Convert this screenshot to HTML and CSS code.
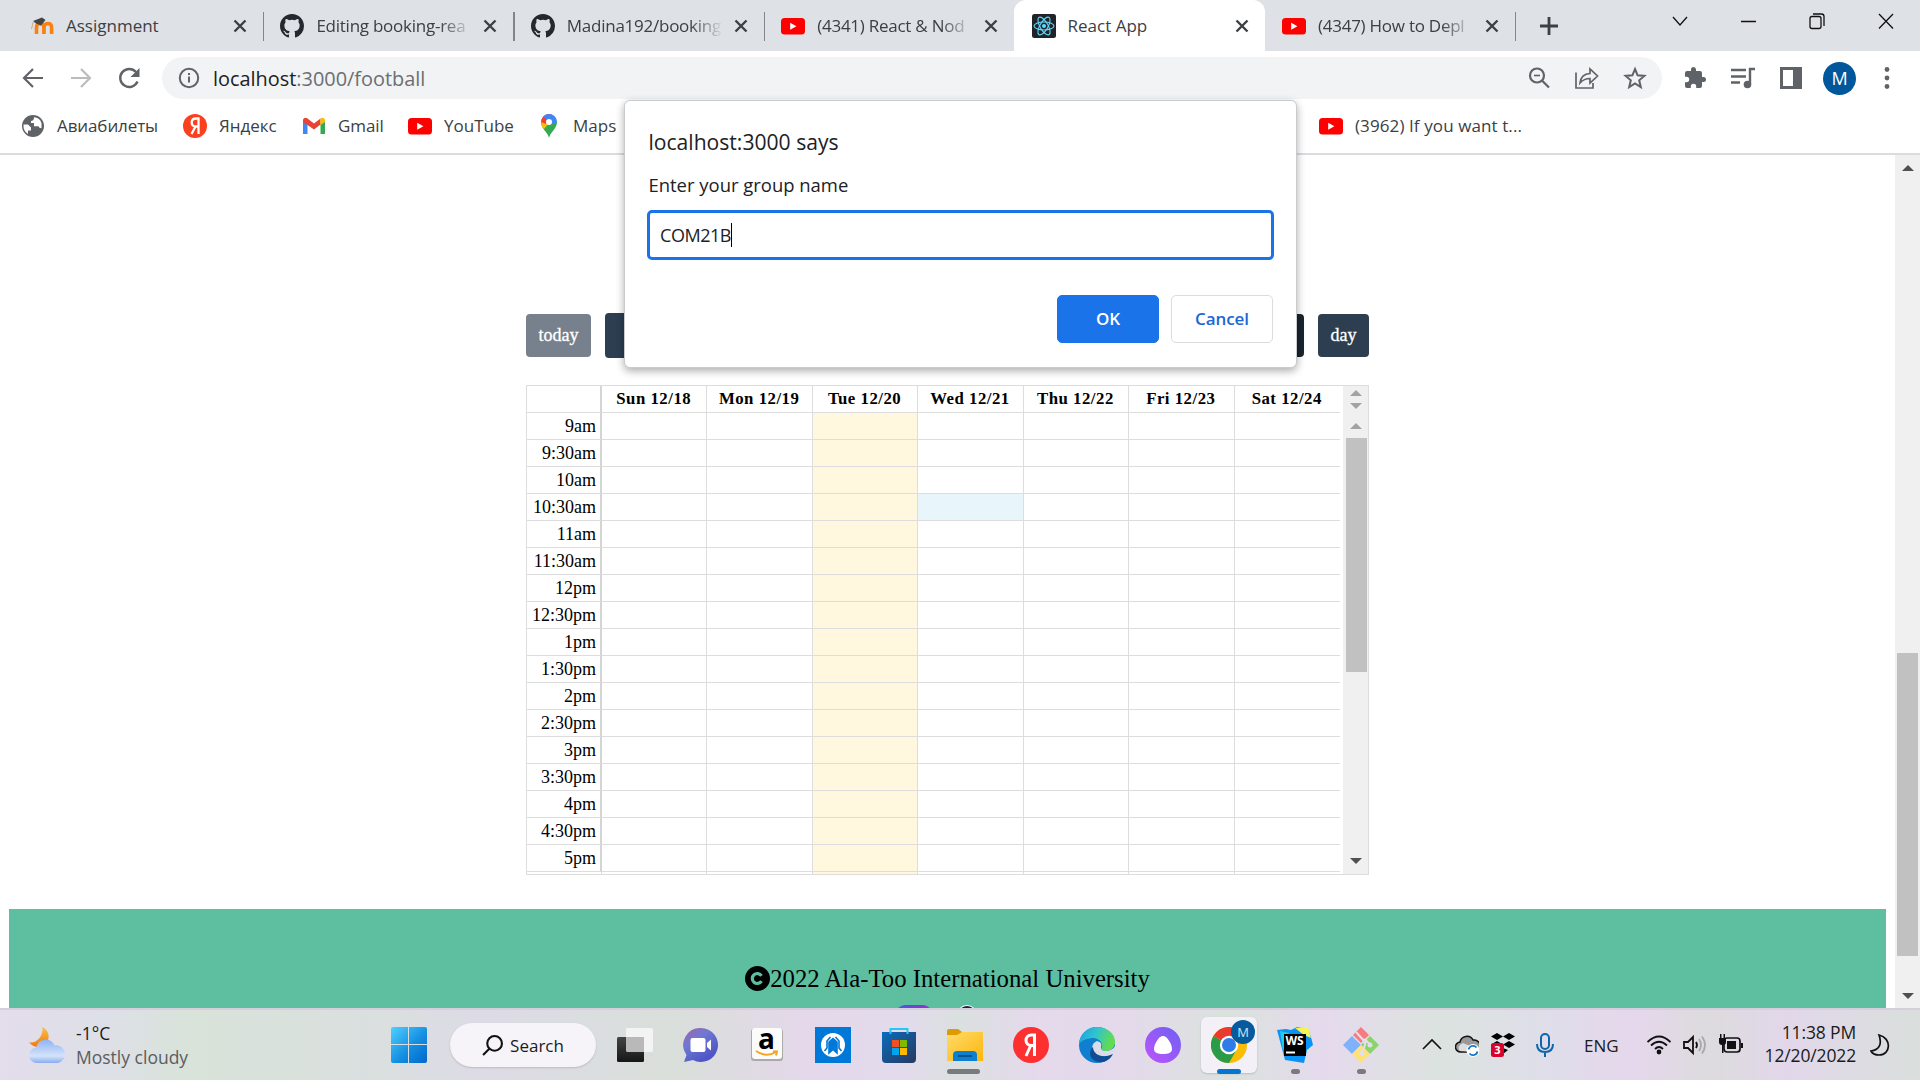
FILE: index.html
```html
<!DOCTYPE html>
<html lang="en">
<head>
<meta charset="utf-8">
<title>React App</title>
<link rel="stylesheet" href="styles.css">
</head>
<body>
<svg class="defs" width="0" height="0">
  <symbol id="x" viewBox="0 0 14 14"><path d="M1.5 1.5l11 11M12.5 1.5l-11 11" stroke="#3c4043" stroke-width="2.4"/></symbol>
  <symbol id="gh" viewBox="0 0 16 16"><path fill="#24292f" d="M8 0C3.58 0 0 3.58 0 8c0 3.54 2.29 6.53 5.47 7.59.4.07.55-.17.55-.38 0-.19-.01-.82-.01-1.49-2.01.37-2.53-.49-2.69-.94-.09-.23-.48-.94-.82-1.13-.28-.15-.68-.52-.01-.53.63-.01 1.08.58 1.23.82.72 1.21 1.87.87 2.33.66.07-.52.28-.87.51-1.07-1.78-.2-3.64-.89-3.64-3.95 0-.87.31-1.59.82-2.15-.08-.2-.36-1.02.08-2.12 0 0 .67-.21 2.2.82a7.6 7.6 0 0 1 4 0c1.53-1.04 2.2-.82 2.2-.82.44 1.1.16 1.92.08 2.12.51.56.82 1.27.82 2.15 0 3.07-1.87 3.75-3.65 3.95.29.25.54.73.54 1.48 0 1.07-.01 1.93-.01 2.2 0 .21.15.46.55.38A8.01 8.01 0 0 0 16 8c0-4.42-3.58-8-8-8z"/></symbol>
  <symbol id="yt" viewBox="0 0 24 24"><rect y="4" width="24" height="16.5" rx="3.5" fill="#f00"/><path d="M9.2 8.8v7l6.2-3.5z" fill="#fff"/></symbol>
  <linearGradient id="win" x2="1" y2="1"><stop stop-color="#4fd0ff"/><stop offset=".55" stop-color="#1590e2"/><stop offset="1" stop-color="#0067cb"/></linearGradient>
  <linearGradient id="cloud" y2="1" x2="0"><stop stop-color="#8fb4f3"/><stop offset=".7" stop-color="#d3e3fa"/><stop offset="1" stop-color="#8aacf0"/></linearGradient>
  <linearGradient id="moonc" y2="1" x2="0"><stop stop-color="#f8c04a"/><stop offset="1" stop-color="#f1790b"/></linearGradient>
  <linearGradient id="chat" x2=".7" y2="1"><stop stop-color="#a165a8"/><stop offset=".4" stop-color="#6f78d2"/><stop offset="1" stop-color="#4b4fc4"/></linearGradient>
  <linearGradient id="store" x2="1" y2="1"><stop stop-color="#0a6cbd"/><stop offset="1" stop-color="#28395f"/></linearGradient>
  <linearGradient id="fold" x2="1" y2="1"><stop stop-color="#ffdc6b"/><stop offset="1" stop-color="#fcb60c"/></linearGradient>
  <linearGradient id="edge1" x2="1" y2=".3"><stop stop-color="#1b9de2"/><stop offset=".5" stop-color="#31c3d0"/><stop offset="1" stop-color="#63dc4e"/></linearGradient>
  <linearGradient id="alice" x2="1" y1="1" y2="0"><stop stop-color="#c053fb"/><stop offset="1" stop-color="#6b61f3"/></linearGradient>
  <linearGradient id="dark" x2="0" y2="1"><stop stop-color="#444"/><stop offset="1" stop-color="#161616"/></linearGradient>
</svg>

<header class="tabs">
  <div class="tab">
    <svg class="fav" viewBox="0 0 24 24"><path d="M6.500 20v-6.500q0-4 3.700-4t3.700 4v6.500M14 20v-6.500q0-4 3.800-4t3.800 4v6.500" stroke="#f98012" stroke-width="3.600" fill="none"/><path d="M3 7l9-3.500 3.500 2.500-4.500 5.500-5-2z" fill="#444"/><path d="M3.500 7l-2 8" stroke="#c9a98a" fill="none"/></svg>
    <span class="name">Assignment</span><svg class="close"><use href="#x"/></svg>
  </div>
  <div class="tab"><svg class="fav"><use href="#gh"/></svg><span class="name fade">Editing booking-rea</span><svg class="close"><use href="#x"/></svg></div>
  <div class="tab"><svg class="fav"><use href="#gh"/></svg><span class="name fade">Madina192/booking</span><svg class="close"><use href="#x"/></svg></div>
  <div class="tab plain"><svg class="fav"><use href="#yt"/></svg><span class="name fade">(4341) React &amp; Nod</span><svg class="close"><use href="#x"/></svg></div>
  <div class="tab active">
    <svg class="fav" viewBox="0 0 24 24"><rect width="24" height="24" rx="2.500" fill="#20232a"/><g fill="none" stroke="#61dafb" stroke-width="1.100"><ellipse cx="12" cy="12" rx="10" ry="4"/><ellipse cx="12" cy="12" rx="10" ry="4" transform="rotate(60 12 12)"/><ellipse cx="12" cy="12" rx="10" ry="4" transform="rotate(120 12 12)"/></g><circle cx="12" cy="12" r="2" fill="#61dafb"/></svg>
    <span class="name">React App</span><svg class="close"><use href="#x"/></svg>
  </div>
  <div class="tab"><svg class="fav"><use href="#yt"/></svg><span class="name fade">(4347) How to Depl</span><svg class="close"><use href="#x"/></svg></div>
  <svg class="plus" viewBox="0 0 20 20"><path d="M10 1v18M1 10h18" stroke="#3c4043" stroke-width="2.800"/></svg>
  <svg class="controls" viewBox="0 0 222 24" fill="none" stroke="#111" stroke-width="1.300"><path d="M1 7l7 8 7-8M69 11.500h15M207 4l14 14.500M221 4l-14 14.500"/><rect x="138" y="6.500" width="11" height="12" rx="2"/><path d="M141 4h8.500q2.500 0 2.500 2.500v9.500"/></svg>
</header>

<nav class="toolbar">
  <svg class="ic" viewBox="0 0 24 24" fill="none" stroke="#5f6368" stroke-width="2.200"><path d="M22 12H3M12 3l-9 9 9 9"/></svg>
  <svg class="ic" viewBox="0 0 24 24" fill="none" stroke="#babcbe" stroke-width="2.200"><path d="M2 12h19M12 3l9 9-9 9"/></svg>
  <svg class="ic" viewBox="0 0 24 24"><path d="M19.500 15.500A9 9 0 1 1 18 6" fill="none" stroke="#5f6368" stroke-width="2.400"/><path d="M21.500 2v9h-9z" fill="#5f6368"/></svg>
  <div class="omnibox">
    <svg class="info" viewBox="0 0 22 22"><circle cx="11" cy="11" r="9.200" fill="none" stroke="#5f6368" stroke-width="2"/><path d="M11 9.500v6M11 6v2" stroke="#5f6368" stroke-width="2"/></svg>
    <span class="url"><b>localhost</b>:3000/football</span>
    <svg class="ic" viewBox="0 0 24 24" fill="none" stroke="#5f6368" stroke-width="2.200"><circle cx="10" cy="9.500" r="7"/><path d="M15 14.500l7 7"/><path d="M7 9.500h6" stroke-width="1.600"/></svg>
    <svg class="ic" viewBox="0 0 24 24" fill="none" stroke="#5f6368" stroke-width="1.700"><path d="M1 6.500v15.500h17v-5M5 17q1-9 10-9.500V3l7.500 7-7.500 7v-4.500q-6 0-10 4.500z"/></svg>
    <svg class="ic" viewBox="0 0 24 24" fill="none" stroke="#5f6368" stroke-width="2"><path d="M12 3l2.600 6.300 6.800.6-5.200 4.400 1.600 6.700-5.800-3.600L6.200 21l1.600-6.700-5.200-4.400 6.800-.6z"/></svg>
  </div>
  <div class="actions">
    <svg class="ic" viewBox="0 0 24 24"><path fill="#5f6368" d="M21.500 11H20V7a2 2 0 0 0-2-2h-4V3.500a2.500 2.500 0 0 0-5 0V5H5a2 2 0 0 0-2 2v3.800h1.500a2.700 2.700 0 0 1 0 5.400H3V20a2 2 0 0 0 2 2h3.800v-1.500a2.700 2.700 0 0 1 5.400 0V22H18a2 2 0 0 0 2-2v-4h1.500a2.500 2.500 0 0 0 0-5z"/></svg>
    <svg class="ic" viewBox="0 0 24 24"><path d="M0 4h15M0 10.500h15M0 16.500h9M19 18V3h5" stroke="#5f6368" stroke-width="2.400" fill="none"/><circle cx="16.500" cy="18.500" r="3.800" fill="#5f6368"/></svg>
    <svg class="ic" viewBox="0 0 24 24"><path fill="#5f6368" d="M1 1h22v22H1zM4 4v16h10V4z" fill-rule="evenodd"/></svg>
    <span class="avatar">M</span>
    <svg class="ic" viewBox="0 0 24 24" fill="#5f6368"><circle cx="11" cy="3.500" r="2.400"/><circle cx="11" cy="12" r="2.400"/><circle cx="11" cy="20.500" r="2.400"/></svg>
  </div>
</nav>

<nav class="bookmarks">
  <a class="bm b1"><svg viewBox="0 0 24 24"><circle cx="12" cy="12" r="11" fill="#5f6368"/><path d="M2.500 10.500h4.500l3 3v3h-3v3.500Q2 17 2.500 10.500zM13 3.200q6 .5 7.500 6v5q-2.500 0-3-2h-4.500V9h-3V7q3 0 3-3.800z" fill="#fff"/></svg>Авиабилеты</a>
  <a class="bm b2"><svg viewBox="0 0 24 24"><circle cx="12" cy="12" r="12" fill="#fc3f1d"/><path d="M15.500 20V4.500h-2.300c-3 0-4.500 1.800-4.500 4s1.500 4 4.500 4h2M12.500 12.500L8.500 20" fill="none" stroke="#fff" stroke-width="2.300"/></svg>Яндекс</a>
  <a class="bm b3"><svg viewBox="0 0 24 24"><path d="M1 6v14h4.500V9z" fill="#4285f4"/><path d="M23 6v14h-4.500V9z" fill="#34a853"/><path d="M1 6.500C1 3.500 4 3 5.500 4.500L12 9.500l6.500-5v6L12 15.500 5.500 11 1 8z" fill="#ea4335"/><path d="M18.500 4.500C20.500 3 23 4 23 6.500V8l-4.500 3z" fill="#fbbc04"/></svg>Gmail</a>
  <a class="bm b4"><svg><use href="#yt"/></svg>YouTube</a>
  <a class="bm b5"><svg viewBox="0 0 24 24"><path d="M12 24c-1-6-8-9-8-16h16c0 7-7 10-8 16z" fill="#34a853"/><path d="M4 8q0 4 3 7l7-8-8-3Q4 6 4 8z" fill="#fbbc04"/><path d="M5.500 3.500Q8 0 12 0l3 .5L9 10 4 8q0-3 1.500-4.500z" fill="#ea4335"/><path d="M6 3Q8 0 12 0c5 0 8 4 8 8l-5 2-4-4z" fill="#4285f4"/><circle cx="12" cy="8" r="3" fill="#fff"/></svg>Maps</a>
  <a class="bm last"><svg><use href="#yt"/></svg>(3962) If you want t...</a>
</nav>

<main class="viewport">
  <section class="page">
    <div class="fc-bar">
      <button class="fc today">today</button><button class="fc prev"></button>
      <span class="grow"></span><button class="fc week"></button><button class="fc day">day</button>
    </div>
    <div class="calendar">
      <table class="grid">
        <colgroup><col class="axis"><col span="7"></colgroup>
        <thead><tr><th></th><th>Sun 12/18</th><th>Mon 12/19</th><th>Tue 12/20</th><th>Wed 12/21</th><th>Thu 12/22</th><th>Fri 12/23</th><th>Sat 12/24</th></tr></thead>
        <tbody id="slots"></tbody>
      </table>
      <div class="scroll">
        <i class="up pale"></i><i class="down pale second"></i><i class="up pale third"></i><span class="thumb"></span><i class="down"></i>
      </div>
    </div>
    <footer class="footer">
      <p><svg class="copy" viewBox="0 0 25 25"><circle cx="12.500" cy="12.500" r="12.500"/><path d="M16.500 9.800a5 5 0 1 0 0 5.400" fill="none" stroke="#5dbea0" stroke-width="3.200"/></svg>2022 Ala-Too International University</p>
      <div class="social"><i class="insta"></i><i class="git"></i></div>
    </footer>
  </section>
  <aside class="pagebar"><i class="up"></i><span class="thumb"></span><i class="down"></i></aside>
</main>

<div class="dialog">
  <h1>localhost:3000 says</h1>
  <label>Enter your group name</label>
  <div class="field"><span>COM21B</span><i class="caret"></i></div>
  <div class="buttons"><button class="ok">OK</button><button class="cancel">Cancel</button></div>
</div>

<div class="taskbar">
  <div class="weather">
    <svg viewBox="0 0 36 36" width="37" height="37"><path d="M13 0C21 4 21 14 14 18Q7 22 0 15q6 1 10-4t3-11z" fill="url(#moonc)"/><path d="M8 35a7.500 7.500 0 0 1-1-15 9.500 9.500 0 0 1 18-2 8.500 8.500 0 0 1 3 17z" fill="url(#cloud)"/></svg>
    <div><p>-1°C</p><p class="dim">Mostly cloudy</p></div>
  </div>
  <svg class="app" viewBox="0 0 36 36"><path d="M2 0h15v17H0V2q0-2 2-2zM18 0h16q2 0 2 2v15H18zM0 18h17v18H2q-2 0-2-2zM18 18h18v16q0 2-2 2H18z" fill="url(#win)"/></svg>
  <div class="search"><svg viewBox="0 0 20 20" width="21" height="21" fill="none" stroke="#111" stroke-width="2"><circle cx="12" cy="8" r="7"/><path d="M7 13l-6 6"/></svg>Search</div>
  <div class="apps">
    <svg class="app" viewBox="0 0 36 36"><rect y="10" width="27" height="25" rx="1.500" fill="url(#dark)"/><path d="M9 10V2.500Q9 1 10.500 1h24Q36 1 36 2.500v21q0 1.500-1.500 1.500H27V10z" fill="#f3f3f3"/><path d="M9 10h18v15H10.500Q9 25 9 23.500z" fill="#b9b9b9"/></svg>
    <svg class="app" viewBox="0 0 36 36"><path d="M18 1a17 17 0 1 1-8 32l-9 2 2.500-7A17 17 0 0 1 18 1z" fill="url(#chat)"/><rect x="7.500" y="11" width="15" height="14" rx="2" fill="#fff"/><path d="M24 16l4-3.500v11L24 20z" fill="#fff"/></svg>
    <svg class="app amazon" viewBox="0 0 36 36"><rect x="2" y="2" width="32" height="32" rx="3" fill="#aaa"/><rect x="3" y="1" width="30" height="31" rx="3" fill="#fbfbfb"/><text x="9" y="22" class="am">a</text><path d="M7 24q10 7 20 1M24 24.500h4l-1 4" fill="none" stroke="#f7a51c" stroke-width="2"/></svg>
    <svg class="app" viewBox="0 0 36 36"><rect width="36" height="36" fill="#0078d7"/><circle cx="18" cy="18" r="12" fill="#fff"/><path d="M9.500 24l2.500-3v-7l3.500-4M14 26V15l4-3.500 4 3.500v11l-4-3.500zM26.500 24L24 21v-7l-3.500-4" fill="none" stroke="#0078d7" stroke-width="1.600"/><path d="M14 26V15l4-3.500 4 3.500v11l-4-3.500z" fill="#0078d7"/></svg>
    <svg class="app" viewBox="0 0 36 36"><path d="M1 5h34v27q0 4-4 4H5q-4 0-4-4z" fill="url(#store)"/><path d="M9.500 7V2h17v5" fill="none" stroke="#28c5f8" stroke-width="2"/><path d="M11 13h7v7h-7z" fill="#f25022"/><path d="M19 13h7v7h-7z" fill="#7fba00"/><path d="M11 21h7v7h-7z" fill="#00a4ef"/><path d="M19 21h7v7h-7z" fill="#ffb900"/></svg>
    <div class="slot"><svg class="app" viewBox="0 0 36 36"><path d="M0 4q0-2 2-2h9l4 3v5H0z" fill="#dd9a05"/><path d="M0 8h10l5-3h21v29H0z" fill="url(#fold)"/><path d="M6 34v-6q0-4 4-4h16q4 0 4 4v6z" fill="#0c7fd0"/><path d="M11 29h14" stroke="#07518c" stroke-width="2"/></svg><i class="mark wide"></i></div>
    <svg class="app" viewBox="0 0 36 36"><circle cx="18" cy="18" r="18" fill="#fc3030"/><path d="M21.500 29V8h-3c-3.500 0-5.500 2.300-5.500 5.300s2 5.200 5.500 5.200h2.500M17.500 19L13 29" fill="none" stroke="#fff" stroke-width="3"/></svg>
    <svg class="app" viewBox="0 0 36 36"><circle cx="18" cy="18" r="18" fill="#0f7fd0"/><path d="M0 17C1 6 9 0 18 0c11 0 18 7 18 15 0 6-5 9-9 9-3 0-6-1-4-4 1-4-2-8-8-9-6 0-12 2-15 6z" fill="url(#edge1)"/><path d="M18 14c-5 2-6 7-3 11 4 6 14 5 19 2l2-2v-6c-3 6-15 7-14 1 1-3 0-5-4-6z" fill="#dcdce8"/><path d="M14 20c0 8 10 12 20 7-3 6-9 9-14 8-8-1-12-9-6-15z" fill="#114c92"/></svg>
    <svg class="app" viewBox="0 0 36 36"><circle cx="18" cy="18" r="18" fill="url(#alice)"/><path d="M18 9c4 0 9 8 9 13 0 4-4 5-9 5s-9-1-9-5c0-5 5-13 9-13z" fill="#fff"/></svg>
    <div class="slot current"><svg class="app" viewBox="0 0 36 36"><circle cx="18" cy="18" r="18" fill="#fbbc04"/><path d="M18 18L2.400 9A18 18 0 0 1 33.600 9z" fill="#ea3a2e"/><path d="M2.400 9A18 18 0 0 0 18 36l8-14-8-4z" fill="#2a9c47"/><circle cx="18" cy="18" r="9.200" fill="#fff"/><circle cx="18" cy="18" r="7" fill="#2f7bea"/></svg><span class="badge">M</span><i class="mark blue"></i></div>
    <div class="slot"><svg class="app" viewBox="0 0 36 36"><path d="M0 3l9-1 5 1 6-3 11 2 3 8 2 8-6 5-3 13-19-3z" fill="#0a93f4"/><path d="M18 1l13-1 3 11-7-3z" fill="#f4f357"/><path d="M3 4l9 2-6 18z" fill="#22ccee"/><rect x="7" y="7" width="22" height="22"/><text x="8.500" y="18" class="ws">WS</text><path d="M9 25.500h9" stroke="#fff" stroke-width="2"/></svg><i class="mark"></i></div>
    <div class="slot"><svg class="app" viewBox="0 0 36 36"><path d="M18 0l8 8-8 8-8-8z" fill="#f77b7e"/><path d="M9 9l9 9-9 9-9-9z" fill="#7fb1fd"/><path d="M27 9l9 9-9 9-9-9z" fill="#88d569"/><path d="M18 18l9 9-9 9-9-9z" fill="#fde27c"/><path d="M13 5l9 10v3l-3 8M22 13l5 4" stroke="#e4dee8" stroke-width="2" fill="none"/><circle cx="22" cy="14" r="2.500" fill="#e4dee8"/><circle cx="27" cy="18" r="2.500" fill="#e4dee8"/><circle cx="19" cy="26" r="2.500" fill="#e4dee8"/></svg><i class="mark"></i></div>
  </div>
  <div class="tray">
    <svg class="chev" viewBox="0 0 20 24" fill="none" stroke="#111" stroke-width="1.600"><path d="M1 16l9-9 9 9"/></svg>
    <svg class="ti" viewBox="0 0 24 24"><path d="M6 19a5 5 0 0 1-1-10 7 7 0 0 1 13-2 5 5 0 0 1 2 12z" fill="#999" stroke="#111" stroke-width="1.500"/><path d="M5 18q-4-5 3-8l14 6-1 3z" fill="#ddd"/><circle cx="18" cy="17.500" r="6.500" fill="#fff"/><path d="M13.500 16.500a4.600 4.600 0 0 1 8-2M22.500 18.500a4.600 4.600 0 0 1-8 2" fill="none" stroke="#1474c4" stroke-width="1.700"/></svg>
    <svg class="ti drop" viewBox="0 0 24 24"><path d="M6 0l6 3.500L6 7 0 3.500zM18 0l6 3.500L18 7l-6-3.500zM6 8l6 3.500L6 15 0 11.500zM18 8l6 3.500L18 15l-6-3.500zM12 15l5 2-5 4z"/><rect y="10" width="13" height="14" rx="2.500" fill="#d9032b"/><text x="3.300" y="21" class="num">3</text></svg>
    <svg class="ti mic" viewBox="0 0 24 24" fill="none" stroke="#0e65ab" stroke-width="2"><rect x="8" y="1" width="8" height="15" rx="4"/><path d="M4 11q0 8 8 8t8-8M12 19v5"/></svg>
    <span class="lang">ENG</span>
    <svg class="ti wifi" viewBox="0 0 24 24" fill="none" stroke="#111" stroke-width="1.800"><path d="M.5 9q11.500-11 23 0M4 12.500q8-7.500 16 0M8 16q4-4 8 0"/><circle cx="12" cy="19" r="1.500" fill="#111"/></svg>
    <svg class="ti spk" viewBox="0 0 24 24" fill="none" stroke="#111" stroke-width="1.800"><path d="M1 9h4l5-5v16l-5-5H1z"/><path d="M13 9q2 3 0 6"/><path d="M16 6q4 6 0 12M19 3.500q6 8.500 0 17" stroke="#aaa7ac"/></svg>
    <svg class="ti bat" viewBox="0 0 24 24"><rect x="5" y="5" width="16" height="14" rx="3" fill="none" stroke="#111" stroke-width="1.700"/><path d="M8 8h9v8H8zM22 10h2v5h-2zM0 5h7v4q0 3-2.500 3V20H3v-8q-3 0-3-3zM1 1h1.500v4H1zM4.500 1H6v4H4.500z" fill="#111"/></svg>
    <div class="clock"><p>11:38 PM</p><p>12/20/2022</p></div>
    <svg class="moon" viewBox="0 0 20 22" fill="none" stroke="#111" stroke-width="1.700"><path d="M9 1c13 3 12 20 0 20-4 0-7-2-8-4 9-1 11-8 8-16z"/></svg>
  </div>
</div>
<script src="slots.js"></script>
</body>
</html>
```
FILE: slots.js
```js
const times = ['9am','9:30am','10am','10:30am','11am','11:30am','12pm','12:30pm','1pm','1:30pm','2pm','2:30pm','3pm','3:30pm','4pm','4:30pm','5pm'];
document.getElementById('slots').innerHTML = times.map(t => {
  let cells = '';
  for (let day = 0; day < 7; day++) {
    const cls = day === 2 ? 'now' : day === 3 && t === '10:30am' ? 'picked' : '';
    cells += `<td class="${cls}"></td>`;
  }
  return `<tr><td class="time">${t}</td>${cells}</tr>`;
}).join('') + '<tr class="rest"><td></td>' + '<td></td><td></td><td class="now"></td>' + '<td></td>'.repeat(4) + '</tr>';
```
FILE: styles.css
```css
* { box-sizing: border-box; }
body { margin: 0; width: 1920px; height: 1080px; overflow: hidden; background: #fff; font-family: "Open Sans", "Noto Sans", sans-serif; font-size: 17px; color: #3c4043; display: flex; flex-direction: column; }
p { margin: 0; }
svg { display: block; flex: none; }
.defs { position: absolute; }

.tabs { height: 51px; background: #dee1e6; display: flex; align-items: center; flex: none; }
.tab { width: 250.4px; height: 51px; padding-left: 30px; display: flex; align-items: center; position: relative; flex: none; }
.tab::after { content: ""; position: absolute; right: -14px; top: 12px; width: 1.500px; height: 29px; background: #80868b; }
.tab.plain::after, .tab.active::after { display: none; }
.fav { width: 24px; height: 24px; margin-right: 12px; }
.name { width: 158px; flex: none; overflow: hidden; white-space: nowrap; }
.fade { letter-spacing: -.25px; -webkit-mask-image: linear-gradient(90deg, #000 78%, transparent 99%); mask-image: linear-gradient(90deg, #000 78%, transparent 99%); }
.close { width: 14px; height: 14px; margin-left: 9px; }
.active::before { content: ""; position: absolute; left: 12px; right: -13.500px; top: 0; bottom: 0; background: #fff; border-radius: 12px 12px 0 0; }
.active > * { position: relative; }
.plus { width: 20px; height: 20px; margin-left: 37px; }
.controls { width: 222px; height: 24px; margin: -8px 0 0 112.500px; }

.toolbar { height: 54px; display: flex; align-items: center; padding-left: 20.500px; flex: none; }
.ic { width: 24px; height: 24px; }
.toolbar > .ic { margin-right: 24.500px; }
.omnibox { width: 1500px; height: 42px; margin-left: -4px; border-radius: 21px; background: #f1f3f4; display: flex; align-items: center; gap: 24px; padding: 0 15px 0 16px; }
.info { width: 22px; height: 22px; margin-right: -11px; }
.url { font-size: 19.900px; flex: 1; color: #6b6f73; }
.url b { font-weight: 400; color: #202124; }
.actions { display: flex; align-items: center; gap: 24.500px; margin-left: 20px; }
.avatar { width: 33px; height: 33px; border-radius: 50%; background: #01579b; color: #fff; display: grid; place-items: center; margin: 0 -4.500px; font-size: 18px; }

.bookmarks { height: 50px; display: flex; align-items: center; border-bottom: 2px solid #dadce0; padding: 0 0 7px 21px; flex: none; white-space: nowrap; }
.bm { display: flex; align-items: center; gap: 12px; flex: none; }
.bm svg { width: 24px; height: 24px; }
.b1 { width: 162px; letter-spacing: -.1px; } .b2 { width: 119px; } .b3 { width: 106px; letter-spacing: -.1px; } .b4 { width: 129px; } .b5 { width: 782px; } .last { letter-spacing: .1px; }

.viewport { height: 853px; flex: none; display: flex; }
.page { width: 1895px; padding: 158px 9px 0; display: flex; flex-direction: column; align-items: center; overflow: hidden; font-family: "Liberation Serif", serif; color: #000; }
.fc-bar { width: 843px; height: 45px; display: flex; align-items: center; flex: none; }
.fc { border: 0; border-radius: 4px; height: 43px; background: #2c3e50; color: #fff; font: 18px "Liberation Serif", serif; -webkit-text-stroke: .3px #fff; padding: 0; }
.today { width: 65px; background: #76818d; }
.prev { width: 50px; height: 45px; margin-left: 14px; }
.grow { flex: 1; }
.week { width: 60px; background: #1a252f; }
.day { width: 51px; margin-left: 14px; }
.calendar { width: 843px; height: 490px; margin-top: 27px; border: 1px solid #ddd; display: flex; justify-content: space-between; overflow: hidden; flex: none; }
.grid { width: 813px; table-layout: fixed; border-collapse: separate; border-spacing: 0; height: 489px; }
.axis { width: 75px; }
.grid th, .grid td { height: 27px; padding: 0; border-bottom: 1px solid #ddd; border-right: 1px solid #ddd; line-height: 24px; }
.grid th { font-size: 16.800px; letter-spacing: .5px; line-height: 24px; padding: 0 1px 0 0; }
.grid th:first-child, .grid .time { border-right-width: 2px; border-right-color: #d5d5d5; }
.grid th:last-child, .grid td:last-child { border-right: 0; }
.grid .time { text-align: right; padding-right: 4px; font-size: 18px; }
.grid .rest td { height: 3px; border-bottom: 0; }
.now { background: #fff8df; }
.picked { background: #e8f6fb; }
.scroll { width: 25px; background: #f0f0f0; display: flex; flex-direction: column; align-items: center; padding-top: 4px; }
.up, .down { border: 6px solid transparent; width: 0; height: 0; flex: none; }
.up { border-top: 0; border-bottom: 6px solid #505050; }
.down { border-bottom: 0; border-top: 6px solid #505050; }
.up.pale { border-bottom-color: #a3a3a3; }
.down.pale { border-top-color: #a3a3a3; }
.second { margin-top: 7px; }
.third { margin-top: 14px; }
.scroll .thumb { width: 24px; border-left: 2px solid #f0f0f0; border-right: 1px solid #f0f0f0; height: 234px; background: #c1c1c1; margin: 9px 0 186px; }
.footer { align-self: stretch; margin-top: 34px; height: 240px; flex: none; background: #5dbea0; padding-top: 55px; }
.footer p { display: flex; justify-content: center; align-items: center; font-size: 24.750px; line-height: 30px; }
.copy { width: 25px; height: 25px; margin-top: -2px; }
.social { display: flex; justify-content: center; gap: 22px; margin-top: 11px; padding-right: 19px; }
.insta { width: 36px; height: 36px; border-radius: 9px; background: linear-gradient(90deg, #405de6, #a02bc8); }
.git { width: 26px; height: 36px; border-radius: 50%; background: #24203a; border: 1px solid #fff; }
.pagebar { width: 25px; background: #f0f0f0; display: flex; flex-direction: column; align-items: center; padding-top: 10px; }
.pagebar .thumb { width: 21px; height: 303px; background: #c1c1c1; margin: 482px 0 37px; }

.dialog { position: absolute; left: 624px; top: 100px; width: 673px; height: 268px; background: #fff; border: 1px solid #c9cbce; border-radius: 6px; box-shadow: 0 3px 8px rgba(0,0,0,.33); padding: 24px 22px; color: #202124; display: flex; flex-direction: column; }
.dialog h1 { margin: 0 0 0 1.500px; font-size: 21.100px; font-weight: 400; line-height: 34px; }
.dialog label { margin: 12px 0 0 1.500px; font-size: 18.450px; line-height: 28px; }
.field { height: 52px; margin-top: 11px; border: 3px solid #1a73e8; border-radius: 5px; display: flex; align-items: center; padding-left: 10px; font-size: 18px; letter-spacing: -.45px; }
.caret { width: 1px; height: 24px; background: #000; }
.buttons { display: flex; justify-content: flex-end; gap: 12px; margin: 35px 1px 0 0; }
.buttons button { width: 102px; height: 48px; border-radius: 5px; border: 1px solid #dadce0; background: #fff; font: 600 17px "Open Sans", sans-serif; letter-spacing: -.1px; color: #1a66d6; padding: 0 0 2px; }
.buttons .ok { background: #1a73e8; border-color: #1a73e8; color: #fff; }

.taskbar { height: 72px; flex: none; display: flex; align-items: center; border-top: 2px solid #d5cedd; color: #1b1b1b; background: linear-gradient(90deg, #e3ddec 0, #dde0e6 6%, #d8e3d9 10%, #dadfdf 20%, #dddbe6 25%, #d9dfda 35%, #e4d8ea 42%, #e3dbec 47%, #dbe0e0 50%, #e5d9ec 54%, #e4daea 59%, #dae2dd 64%, #e5daed 69%, #dce3df 75%, #dfddea 81%, #e6d7ec 85%, #dcdbdd 89%, #e2d7ea 93%, #d9dfdc 100%); }
.weather { width: 360px; padding-left: 29px; display: flex; align-items: center; gap: 10px; font-size: 17.500px; line-height: 24px; }
.dim { color: #5b5d5e; }
.app { width: 36px; height: 36px; }
.search { width: 146px; height: 44px; margin: 0 21px 0 23px; border-radius: 22px; background: #f6f4f9; box-shadow: 0 1px 2px #bbb; display: flex; align-items: center; justify-content: center; gap: 7px; font-size: 17px; }
.weather + .app { margin-left: 31px; }
.apps { display: flex; gap: 30px; align-items: center; }
.slot { position: relative; width: 36px; height: 36px; }
.mark { position: absolute; bottom: -11px; left: 14px; width: 9px; height: 5px; border-radius: 3px; background: #7a7a7c; }
.mark.wide { left: 0; width: 33px; }
.mark.blue { left: 6px; width: 24px; background: #0575d2; }
.current::before { content: ""; position: absolute; inset: -10px; background: #f3f0f7; border-radius: 6px; box-shadow: 0 1px 2px #bbb; }
.current .app { position: relative; }
.badge { position: absolute; left: 20px; top: -7px; width: 24px; height: 24px; border-radius: 50%; background: #075b9c; color: #cfe3f3; font-size: 13px; display: grid; place-items: center; }
.am { font: 700 28px "Open Sans", sans-serif; }
.ws { font: 700 12px "Open Sans", sans-serif; fill: #fff; }
.num { font: 700 11px "Open Sans", sans-serif; fill: #fff; }
.tray { display: flex; align-items: center; flex: 1; margin-left: 43px; }
.chev { width: 20px; height: 24px; }
.ti { width: 24px; height: 24px; margin-left: 13px; }
.drop { margin-left: 12px; }
.mic { margin-left: 18px; }
.lang { font-size: 17px; width: 36px; margin-left: 27px; }
.wifi { margin-left: 27px; } .spk { margin-left: 12px; } .bat { margin-left: 12px; }
.clock { width: 113px; text-align: right; font-size: 17.500px; line-height: 23px; letter-spacing: -.15px; margin-top: -2px; }
.moon { width: 20px; height: 22px; margin-left: 14px; }
```
